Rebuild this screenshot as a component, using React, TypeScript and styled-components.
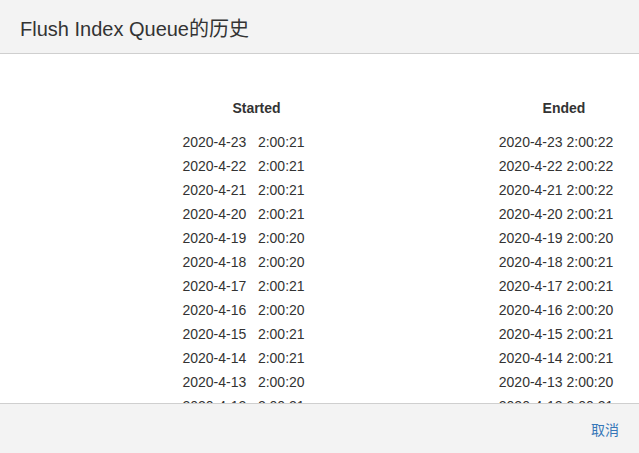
import React from "react";
import styled, { createGlobalStyle } from "styled-components";

const GlobalStyle = createGlobalStyle`
    html, body {
        margin: 0;
        padding: 0;
        background: #ffffff;
    }
    body {
        font-family: "Liberation Sans", "Noto Sans CJK SC", sans-serif;
        color: #333333;
    }
`;

interface IRun {
    date: string;
    started: string;
    ended: string;
}

const runs: Array<IRun> = [
    { date: "2020-4-23", started: "2:00:21", ended: "2:00:22" },
    { date: "2020-4-22", started: "2:00:21", ended: "2:00:22" },
    { date: "2020-4-21", started: "2:00:21", ended: "2:00:22" },
    { date: "2020-4-20", started: "2:00:21", ended: "2:00:21" },
    { date: "2020-4-19", started: "2:00:20", ended: "2:00:20" },
    { date: "2020-4-18", started: "2:00:20", ended: "2:00:21" },
    { date: "2020-4-17", started: "2:00:21", ended: "2:00:21" },
    { date: "2020-4-16", started: "2:00:20", ended: "2:00:20" },
    { date: "2020-4-15", started: "2:00:21", ended: "2:00:21" },
    { date: "2020-4-14", started: "2:00:21", ended: "2:00:21" },
    { date: "2020-4-13", started: "2:00:20", ended: "2:00:20" },
    { date: "2020-4-12", started: "2:00:21", ended: "2:00:21" },
];

const App = () => {
    return (
        <>
            <GlobalStyle />
            <Modal>
                <Header>
                    <Title>Flush Index Queue的历史</Title>
                </Header>
                <Body>
                    <Table>
                        <HeadCell>Started</HeadCell>
                        <HeadCell>Ended</HeadCell>
                        {runs.map((run, key) => (
                            <React.Fragment key={key}>
                                <Cell shift={26}>{`${run.date}   ${run.started}`}</Cell>
                                <Cell shift={16}>{`${run.date} ${run.ended}`}</Cell>
                            </React.Fragment>
                        ))}
                    </Table>
                </Body>
                <Footer>
                    <LinkButton>取消</LinkButton>
                </Footer>
            </Modal>
        </>
    );
};

export default App;

const Modal = styled.div`
    width: 639px;
    height: 453px;
    display: flex;
    flex-direction: column;
    overflow: hidden;
`;

const Header = styled.div`
    box-sizing: border-box;
    height: 54px;
    padding: 19px 20px 0;
    background-color: #f3f3f3;
    border-bottom: 1px solid #cfcfcf;
    flex-shrink: 0;
`;

const Title = styled.h4`
    margin: 0;
    font-size: 20px;
    line-height: 20px;
    font-weight: normal;
    color: #333333;
`;

const Body = styled.div`
    flex: 1;
    min-height: 0;
    overflow: hidden;
    padding-top: 42px;
    background: #ffffff;
`;

const Table = styled.div`
    display: grid;
    grid-template-columns: 513px 102px;
    grid-template-rows: 34px;
    grid-auto-rows: 24px;
    font-size: 14px;
    line-height: 24px;
`;

const HeadCell = styled.div`
    font-weight: bold;
    text-align: center;
    align-self: start;
`;

const Cell = styled.div<{ shift: number }>`
    display: flex;
    justify-content: center;
    white-space: pre;
    padding-right: ${(p) => p.shift}px;
`;

const Footer = styled.div`
    box-sizing: border-box;
    height: 50px;
    flex-shrink: 0;
    display: flex;
    align-items: center;
    justify-content: flex-end;
    padding: 0 20px;
    background-color: #f3f3f3;
    border-top: 1px solid #cfcfcf;
`;

const LinkButton = styled.span`
    font-size: 14px;
    color: #3677b8;
    cursor: pointer;
`;
